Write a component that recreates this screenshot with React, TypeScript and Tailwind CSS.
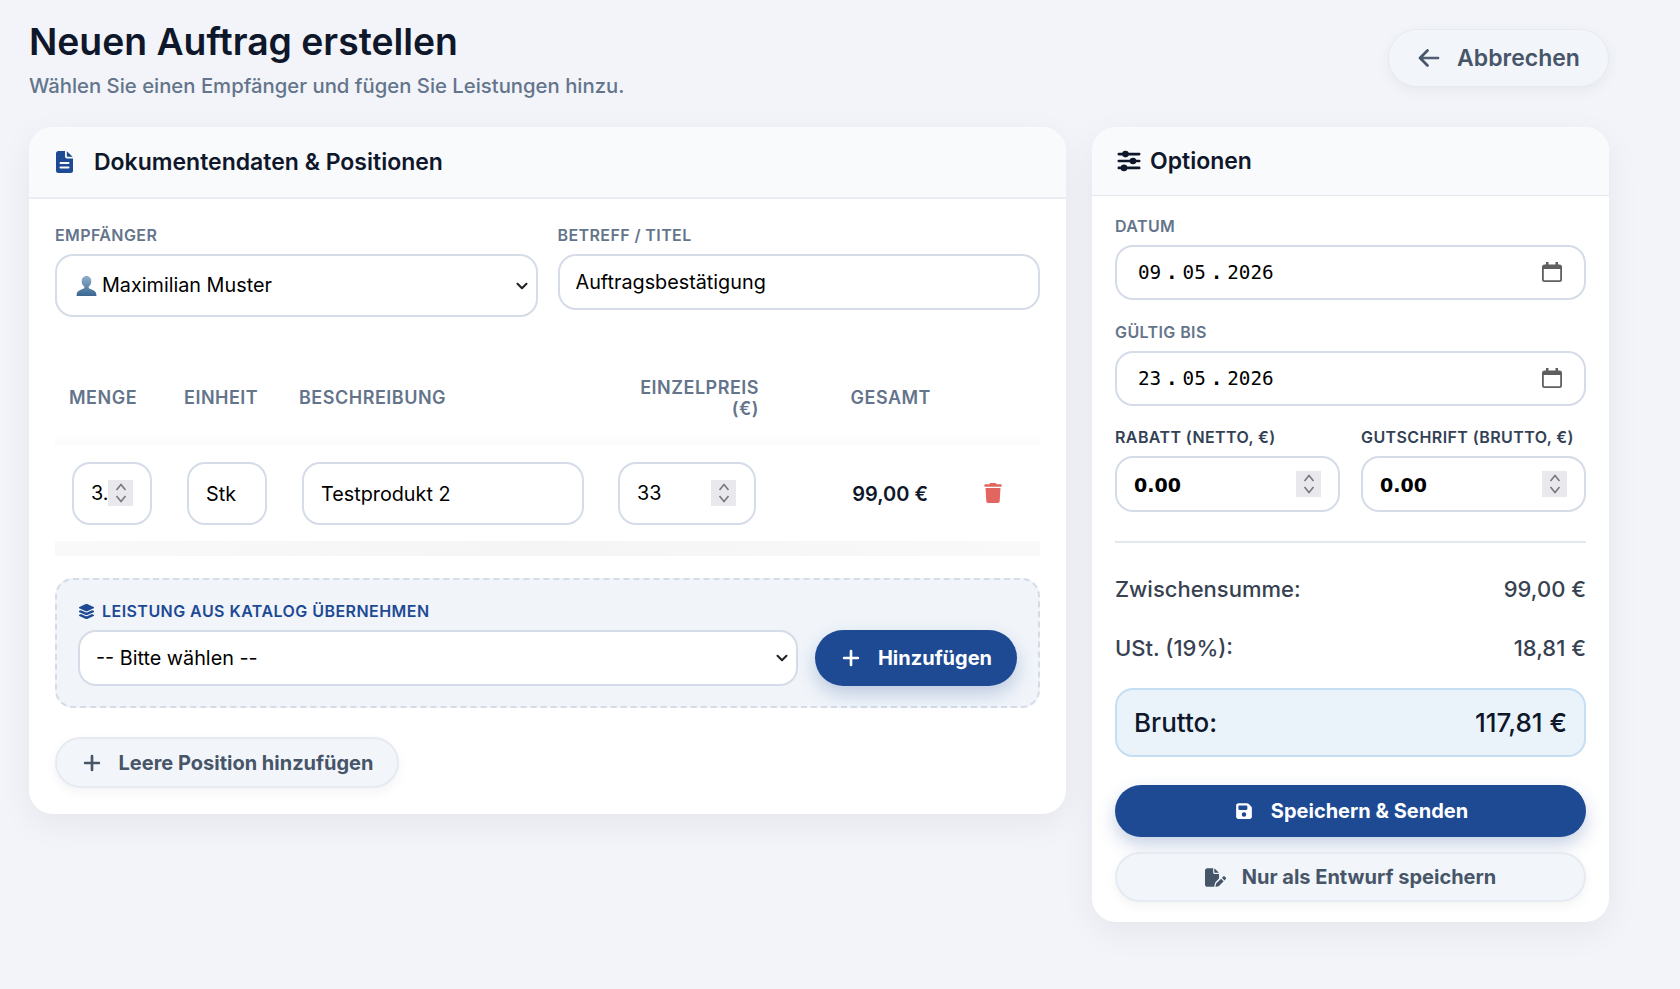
import { HiArrowLeft, HiPlus } from "react-icons/hi2";
import { FaFilePen, FaFloppyDisk, FaLayerGroup, FaTrash } from "react-icons/fa6";
import { ChevronDown } from "lucide-react";

const inter = "font-['Inter',sans-serif]";

const Label = ({ children, dark = false }: { children: React.ReactNode; dark?: boolean }) => (
  <label
    className={`block h-5 mb-[9px] text-[16px] leading-5 font-semibold tracking-[0.4px] ${
      dark ? "text-[#334155]" : "text-[#64748b]"
    }`}
  >
    {children}
  </label>
);

const Spinner = () => (
  <span className="flex items-center justify-center shrink-0 w-[25px] h-[26px] bg-[#e9e9ed]">
    <svg width="12" height="22" viewBox="0 0 12 22" fill="none" stroke="#77777f" strokeWidth="1.6">
      <path d="M1.500 8 6 2.500 10.500 8" />
      <path d="M1.500 14 6 19.500 10.500 14" />
    </svg>
  </span>
);

const Select = ({ h, children }: { h: string; children: React.ReactNode }) => (
  <div
    className={`${h} flex items-center justify-between rounded-[18px] border-2 border-[#d5dce8] bg-white pl-[16px] pr-[5px] text-[19.8px] text-black`}
  >
    <span className="flex items-center pt-[1px]">{children}</span>
    <ChevronDown size={18} strokeWidth={2.8} className="text-[#222]" />
  </div>
);

const NumberField = ({ value, className, pad }: { value: string; className: string; pad: string }) => (
  <div className={`flex items-center rounded-[18px] border-2 border-[#d5dce8] bg-white ${pad} ${className}`}>
    <input
      readOnly
      value={value}
      className="w-full min-w-0 flex-1 bg-transparent pt-[2px] text-[19.8px] text-black outline-none"
    />
    <Spinner />
  </div>
);

const TextField = ({ value, className }: { value: string; className: string }) => (
  <input
    readOnly
    value={value}
    className={`rounded-[18px] border-2 border-[#d5dce8] bg-white px-[16px] text-[19.8px] text-black outline-none ${className}`}
  />
);

const DateField = ({ d, m, y }: { d: string; m: string; y: string }) => (
  <div className="h-[55px] flex items-center justify-between rounded-[18px] border-2 border-[#d5dce8] bg-white pl-[21px] pr-[21px] font-['DejaVu_Sans_Mono',monospace] text-[19.3px] text-black">
    <span className="flex pt-[2px]">
      <span>{d}</span>
      <span className="mx-[4.9px] font-bold">.</span>
      <span>{m}</span>
      <span className="mx-[4.9px] font-bold">.</span>
      <span>{y}</span>
    </span>
    <svg width="22" height="22" viewBox="0 0 22 22" className="-mt-[2px] text-[#5f5f5f]">
      <path
        d="M5 1h2.500v2.500h7V1H17v2.500h1.500A2.500 2.500 0 0 1 21 6v12.500a2.500 2.500 0 0 1-2.500 2.500h-15A2.500 2.500 0 0 1 1 18.500V6a2.500 2.500 0 0 1 2.500-2.500H5zM2.800 8v10.500c0 .4.300.700.700.700h15c.4 0 .700-.300.700-.700V8z"
        fill="currentColor"
      />
    </svg>
  </div>
);

const PersonIcon = () => (
  <svg width="21" height="22" viewBox="0 0 21 22" className="ml-[3px] mr-[5px]">
    <defs>
      <linearGradient id="bust" x1="0" y1="0" x2="0" y2="1">
        <stop offset="0" stopColor="#8fb0cf" />
        <stop offset="1" stopColor="#3a6690" />
      </linearGradient>
    </defs>
    <path
      d="M10.500 1c3 0 4.800 2.300 4.800 5.200 0 2.300-1 4.300-2.400 5.300-.5.400-.4 1.500.3 1.900 2.600 1.200 5.800 2 6.800 4.400.3.900.4 2.200.4 3.200H.6c0-1 .1-2.300.4-3.200 1-2.400 4.200-3.200 6.800-4.400.7-.4.8-1.500.3-1.900-1.400-1-2.400-3-2.400-5.300C5.700 3.300 7.500 1 10.500 1z"
      fill="url(#bust)"
    />
  </svg>
);

const DocIcon = () => (
  <svg width="17" height="22" viewBox="0 0 17 22" className="text-[#1e4a94]">
    <path
      fillRule="evenodd"
      d="M2.500 0H9v5.500A2 2 0 0 0 11 7.500h6v12A2.500 2.500 0 0 1 14.500 22h-12A2.500 2.500 0 0 1 0 19.500v-17A2.500 2.500 0 0 1 2.500 0zM4.500 11a1 1 0 0 0 0 2h8a1 1 0 0 0 0-2zM4.500 15.500a1 1 0 0 0 0 2h8a1 1 0 0 0 0-2z"
      fill="currentColor"
    />
    <path d="M10.800 0.300 16.700 5.800H11.500a.7.700 0 0 1-.7-.7z" fill="currentColor" />
  </svg>
);

const SlidersIcon = () => (
  <svg width="24" height="22" viewBox="0 0 24 22" className="text-[#0f172a]">
    <g fill="currentColor">
      <rect x="0.500" y="2.800" width="23" height="2.600" rx="1.300" />
      <rect x="0.500" y="9.700" width="23" height="2.600" rx="1.300" />
      <rect x="0.500" y="16.600" width="23" height="2.600" rx="1.300" />
      <circle cx="8.500" cy="4.100" r="3.300" />
      <circle cx="16" cy="11" r="3.300" />
      <circle cx="7" cy="17.900" r="3.300" />
    </g>
  </svg>
);

const App = () => {
  return (
    <div className={`${inter} min-h-[989px] bg-[#f2f4f9] pl-[29px] pr-[71px] pt-[29px]`}>
      <header className="flex justify-between h-[58px] mb-[40px]">
        <div>
          <h1 className="-mt-[12px] text-[37.3px] leading-[50px] font-semibold text-[#0f172a]">
            Neuen Auftrag erstellen
          </h1>
          <p className="mt-[5px] text-[20.3px] leading-7 font-medium text-[#64748b]">
            Wählen Sie einen Empfänger und fügen Sie Leistungen hinzu.
          </p>
        </div>
        <button className="w-[221px] flex items-center justify-center gap-[16px] rounded-full border border-[#e6eaf1] bg-[#f2f5fa] text-[23px] font-semibold text-[#475569] shadow-[0_4px_14px_rgba(15,23,42,0.05)]">
          <HiArrowLeft size={24} strokeWidth={1.2} />
          Abbrechen
        </button>
      </header>

      <div className="grid grid-cols-[1037px_517px] gap-[26px] items-start">
        <section className="rounded-[24px] bg-white shadow-[0_10px_34px_rgba(15,23,42,0.06)] overflow-hidden">
          <div className="h-[72px] flex items-center gap-[21px] border-b-2 border-[#e8ecf3] bg-[#f9fafc] pl-[27px]">
            <DocIcon />
            <h2 className="text-[23px] font-semibold text-[#0f172a]">Dokumentendaten &amp; Positionen</h2>
          </div>

          <div className="px-[26px] pt-[26px] pb-[26px]">
            <div className="grid grid-cols-2 gap-[20px] items-start">
              <div>
                <Label>EMPFÄNGER</Label>
                <Select h="h-[63px]">
                  <PersonIcon />
                  Maximilian Muster
                </Select>
              </div>
              <div>
                <Label>BETREFF / TITEL</Label>
                <TextField value="Auftragsbestätigung" className="w-full h-[56px]" />
              </div>
            </div>

            <div className="mt-[44px] h-[73px] grid grid-cols-[114px_115px_316px_173px_171px_96px] items-center text-[18px] leading-[21px] font-semibold tracking-[0.5px] text-[#64748b]">
              <div className="pl-[14px]">MENGE</div>
              <div className="pl-[15px]">EINHEIT</div>
              <div className="pl-[15px]">BESCHREIBUNG</div>
              <div className="pr-[14px] flex justify-end">
                <span className="w-[122px] text-right">EINZELPREIS (€)</span>
              </div>
              <div className="pr-[13px] text-right">GESAMT</div>
              <div />
            </div>
            <div className="h-[11px] bg-gradient-to-b from-white to-[#fbfbfc]" />

            <div className="h-[96px] grid grid-cols-[114px_115px_316px_173px_171px_96px] items-center">
              <div className="pl-[17px]">
                <NumberField value="3.00" pad="pl-[17px] pr-[17px]" className="w-[80px] h-[63px]" />
              </div>
              <div className="pl-[18px]">
                <TextField value="Stk" className="w-[80px] h-[63px] pt-[2px] pl-[17px]" />
              </div>
              <div className="pl-[18px]">
                <TextField value="Testprodukt 2" className="w-[282px] h-[63px] pt-[2px] pl-[17px]" />
              </div>
              <div className="pl-[18px]">
                <NumberField value="33" pad="pl-[17px] pr-[18px]" className="w-[138px] h-[63px]" />
              </div>
              <div className="pr-[16px] pt-[2px] text-right text-[20px] font-semibold text-[#0f172a]">99,00 €</div>
              <div className="flex justify-center pl-[1px]">
                <FaTrash size={20} className="text-[#e2665f]" />
              </div>
            </div>
            <div className="h-[15px] bg-gradient-to-r from-[#f9f9fa] via-[#f5f5f6] to-[#f9f9fa]" />

            <div className="mt-[22px] h-[130px] rounded-[18px] border-2 border-dashed border-[#d5dce8] bg-[#f1f5fa] px-[21px] pt-[21px]">
              <div className="h-5 mb-[9px] flex items-center gap-[7px] text-[16px] font-semibold tracking-[0.45px] text-[#1e4a94]">
                <FaLayerGroup size={17} />
                LEISTUNG AUS KATALOG ÜBERNEHMEN
              </div>
              <div className="flex items-start gap-[17px]">
                <div className="flex-1">
                  <Select h="h-[56px]">-- Bitte wählen --</Select>
                </div>
                <button className="w-[202px] h-[56px] flex items-center justify-center gap-[16px] rounded-full bg-[#1e4a94] text-[20px] font-bold text-white shadow-[0_8px_18px_rgba(30,74,148,0.25)]">
                  <HiPlus size={22} strokeWidth={1.4} />
                  Hinzufügen
                </button>
              </div>
            </div>

            <button className="mt-[29px] w-[344px] h-[51px] flex items-center justify-center gap-[16px] rounded-full border-2 border-[#e6eaf1] bg-[#f2f5fa] text-[20px] font-bold text-[#475569] shadow-[0_4px_12px_rgba(15,23,42,0.05)]">
              <HiPlus size={22} strokeWidth={1.4} />
              Leere Position hinzufügen
            </button>
          </div>
        </section>

        <aside className="rounded-[24px] bg-white shadow-[0_10px_34px_rgba(15,23,42,0.06)] overflow-hidden">
          <div className="h-[69px] flex items-center gap-[9px] border-b border-[#e2e7ef] bg-[#f9fafc] pl-[25px]">
            <SlidersIcon />
            <h2 className="text-[23px] font-semibold text-[#0f172a]">Optionen</h2>
          </div>

          <div className="px-[23px] pt-[20px] pb-[20px]">
            <Label>DATUM</Label>
            <DateField d="09" m="05" y="2026" />
            <div className="h-[22px]" />
            <Label>GÜLTIG BIS</Label>
            <DateField d="23" m="05" y="2026" />
            <div className="h-[21px]" />
            <div className="grid grid-cols-2 gap-[21px]">
              <div>
                <Label dark>RABATT (NETTO, €)</Label>
                <div className="h-[56px] flex items-center rounded-[18px] border-2 border-[#d5dce8] bg-white pl-[17px] pr-[17px]">
                  <span className="flex-1 pt-[2px] font-['DejaVu_Sans',sans-serif] text-[19px] font-bold text-black">0.00</span>
                  <Spinner />
                </div>
              </div>
              <div>
                <Label dark>GUTSCHRIFT (BRUTTO, €)</Label>
                <div className="h-[56px] flex items-center rounded-[18px] border-2 border-[#d5dce8] bg-white pl-[17px] pr-[17px]">
                  <span className="flex-1 pt-[2px] font-['DejaVu_Sans',sans-serif] text-[19px] font-bold text-black">0.00</span>
                  <Spinner />
                </div>
              </div>
            </div>

            <div className="mt-[29px] mb-[17px] h-[2px] bg-[#e2e7f0]" />

            <div className="h-[59px] flex items-center justify-between text-[22px] font-medium text-[#374151]">
              <span>Zwischensumme:</span>
              <span>99,00 €</span>
            </div>
            <div className="h-[58px] flex items-center justify-between text-[22px] font-medium text-[#374151]">
              <span>USt. (19%):</span>
              <span>18,81 €</span>
            </div>

            <div className="mt-[11px] h-[69px] flex items-center justify-between rounded-[18px] border-2 border-[#c5def2] bg-[#ebf3fa] px-[17px] text-[26px] font-medium text-[#0f172a]">
              <span>Brutto:</span>
              <span>117,81 €</span>
            </div>

            <button className="mt-[28px] w-full h-[52px] flex items-center justify-center gap-[18px] rounded-full bg-[#1e4a94] pl-[2px] text-[20px] font-bold text-white shadow-[0_8px_18px_rgba(30,74,148,0.25)]">
              <FaFloppyDisk size={18} />
              Speichern &amp; Senden
            </button>
            <button className="mt-[15px] w-full h-[50px] flex items-center justify-center gap-[16px] rounded-full border-2 border-[#e6eaf1] bg-[#f2f5fa] text-[20px] font-bold text-[#475569] shadow-[0_4px_12px_rgba(15,23,42,0.05)]">
              <FaFilePen size={21} />
              Nur als Entwurf speichern
            </button>
          </div>
        </aside>
      </div>
    </div>
  );
};

export default App;
